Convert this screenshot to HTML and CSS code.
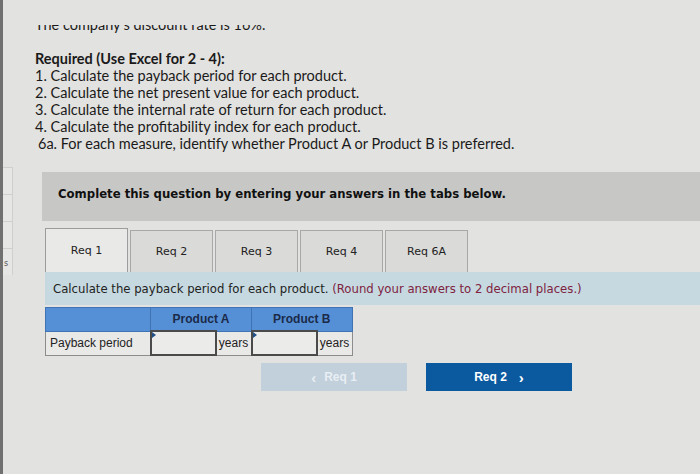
FILE: index.html
```html
<!DOCTYPE html>
<html>
<head>
<meta charset="utf-8">
<link rel="stylesheet" href="styles.css">
</head>
<body>
<div class="edge"></div>
<div class="side">
  <div class="side-box"></div>
  <div class="side-box"></div>
  <div class="side-box"></div>
  <div class="side-box"><span class="side-s">s</span></div>
</div>
<div class="main">
  <div class="cut"><p>The company's discount rate is 16%.</p></div>
  <div class="req">
    <p class="req-title">Required (Use Excel for 2 - 4):</p>
    <p>1. Calculate the payback period for each product.</p>
    <p>2. Calculate the net present value for each product.</p>
    <p>3. Calculate the internal rate of return for each product.</p>
    <p>4. Calculate the profitability index for each product.</p>
    <p class="six">6a. For each measure, identify whether Product A or Product B is preferred.</p>
  </div>
  <div class="band">Complete this question by entering your answers in the tabs below.</div>
  <div class="quiz">
    <div class="tabs">
      <div class="tab active">Req 1</div>
      <div class="tab">Req 2</div>
      <div class="tab">Req 3</div>
      <div class="tab">Req 4</div>
      <div class="tab">Req 6A</div>
    </div>
    <div class="panel">Calculate the payback period for each product. <span class="note">(Round your answers to 2 decimal places.)</span></div>
    <table class="grid">
      <tr class="head">
        <th class="c-label"></th>
        <th colspan="2">Product A</th>
        <th colspan="2">Product B</th>
      </tr>
      <tr class="row">
        <td class="c-label">Payback period</td>
        <td class="c-input"><span class="mark"></span></td>
        <td class="c-unit">years</td>
        <td class="c-input"><span class="mark"></span></td>
        <td class="c-unit">years</td>
      </tr>
    </table>
    <div class="nav">
      <div class="btn prev"><span class="chev">&lsaquo;</span>Req 1</div>
      <div class="btn next">Req 2<span class="chev">&rsaquo;</span></div>
    </div>
  </div>
</div>
</body>
</html>
```

FILE: styles.css
```css
html, body {
  margin: 0;
  padding: 0;
}
body {
  width: 700px;
  height: 474px;
  overflow: hidden;
  display: flex;
  background: #e2e2e0;
  font-family: Lato, "Liberation Sans", sans-serif;
  color: #1a1a1a;
}
.edge {
  width: 3px;
  flex: none;
  background: #707070;
}
.side {
  width: 10px;
  flex: none;
  padding-top: 167px;
  display: flex;
  flex-direction: column;
}
.side-box {
  height: 26px;
  border-top: 1px solid #cfcfcd;
  border-right: 1px solid #cfcfcd;
  background: #e6e6e4;
}
.side-s {
  display: block;
  font-family: "DejaVu Sans", sans-serif;
  font-size: 8px;
  color: #555;
  padding-top: 10px;
  padding-left: 1px;
}
.main {
  flex: 1;
  padding-left: 22px;
  min-width: 0;
}
.cut {
  margin-top: 25px;
  height: 8px;
  overflow: hidden;
}
.cut p {
  margin: -9px 0 0 0;
  font-size: 14.5px;
  line-height: 17px;
  white-space: nowrap;
}
.req {
  margin-top: 17px;
  font-size: 14.5px;
  line-height: 17px;
}
.req p {
  margin: 0;
  white-space: nowrap;
}
.req-title {
  font-weight: bold;
}
.six {
  padding-left: 3px;
}
.band {
  margin-top: 20px;
  margin-left: 7px;
  height: 49px;
  background: #c7c8c6;
  padding-left: 16px;
  padding-bottom: 6px;
  box-sizing: border-box;
  display: flex;
  align-items: center;
  font-family: "DejaVu Sans", Verdana, sans-serif;
  font-weight: bold;
  font-size: 11.7px;
  color: #111;
  white-space: nowrap;
}
.quiz {
  margin-left: 10px;
}
.tabs {
  margin-top: 7px;
  display: flex;
  align-items: flex-end;
  gap: 2px;
  height: 44px;
}
.tab {
  width: 83px;
  height: 42px;
  box-sizing: border-box;
  border: 1px solid #a8a8a8;
  border-bottom: none;
  background: #dadad8;
  display: flex;
  align-items: center;
  justify-content: center;
  font-family: "DejaVu Sans", Verdana, sans-serif;
  font-size: 11px;
  color: #222;
}
.tab.active {
  height: 44px;
  background: #e9e9e7;
  border-color: #9c9c9c;
}
.panel {
  height: 33px;
  background: #c6d9e0;
  padding-left: 8px;
  display: flex;
  align-items: center;
  font-family: "DejaVu Sans", Verdana, sans-serif;
  font-size: 11.7px;
  color: #222;
  white-space: pre;
}
.note {
  color: #7e2340;
}
.grid {
  margin-top: 2px;
  border-collapse: collapse;
  font-family: "Liberation Sans", Arial, sans-serif;
  font-size: 12px;
}
.grid th, .grid td {
  padding: 0;
}
.head th {
  height: 22px;
  background: #5590d7;
  border: 1px solid #3f73b4;
  color: #1b2a48;
  font-weight: bold;
  text-align: center;
}
.row td {
  height: 22px;
  border: 1px solid #8c8c8c;
  background: #e9e9e8;
  color: #222;
}
.c-label {
  width: 105px;
  text-align: left;
  padding-left: 4px !important;
  box-sizing: border-box;
}
.row .c-input {
  width: 63px;
  border: 2px solid #4a4a4a;
  background: #ebebea;
  position: relative;
}
.mark {
  position: absolute;
  left: 0;
  top: 0;
  width: 0;
  height: 0;
  border-top: 3px solid transparent;
  border-bottom: 3px solid transparent;
  border-left: 4px solid #1f4f86;
}
.c-unit {
  width: 34px;
  text-align: center;
}
.nav {
  margin-top: 7px;
  margin-left: 216px;
  display: flex;
  gap: 19px;
}
.btn {
  width: 146px;
  height: 28px;
  display: flex;
  align-items: center;
  justify-content: center;
  font-family: "Liberation Sans", Arial, sans-serif;
  font-weight: bold;
  font-size: 12px;
}
.prev {
  background: #c2d0db;
  color: #e8eef3;
}
.prev .chev {
  margin-right: 8px;
  font-size: 15px;
}
.next {
  background: #0b5a9f;
  color: #ffffff;
}
.next .chev {
  margin-left: 12px;
  font-size: 15px;
}
```
